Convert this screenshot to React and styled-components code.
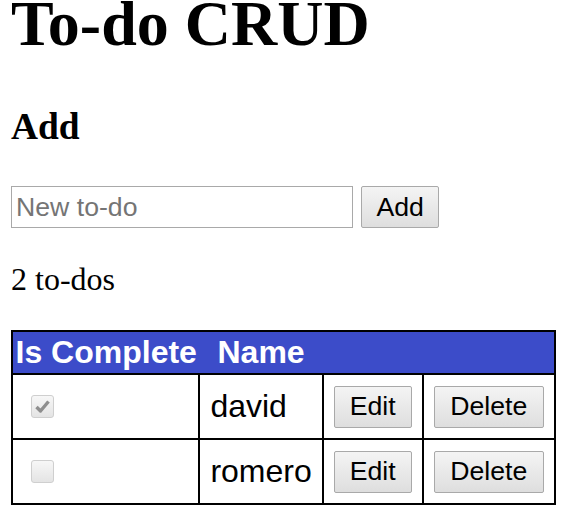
import React, { useState } from 'react';
import styled, { createGlobalStyle } from 'styled-components';

const GlobalStyle = createGlobalStyle`
  html, body {
    margin: 0;
    padding: 0;
    background: #fff;
  }
  body {
    padding: 0 11px;
    font-family: "Liberation Serif", "Times New Roman", serif;
    font-size: 32px;
    color: #000;
  }
`

const Title = styled.h1`
  margin: 0;
  font-size: 64px;
  line-height: 48px;
  font-weight: bold;
`

const SubTitle = styled.h3`
  margin: 57px 0 0;
  font-size: 37.44px;
  line-height: 43px;
  font-weight: bold;
`

const AddForm = styled.form`
  display: flex;
  align-items: center;
  gap: 8px;
  margin-top: 38px;
`

const TextInput = styled.input`
  box-sizing: border-box;
  width: 342px;
  height: 42px;
  padding: 0 4px;
  border: 1px solid #a9a9a9;
  border-radius: 0;
  font-family: "Liberation Sans", Arial, sans-serif;
  font-size: 26.67px;
  color: #000;
  outline: none;

  &::placeholder {
    color: #757575;
  }
`

const Button = styled.button`
  box-sizing: border-box;
  height: 42px;
  padding: 0 ${p => p.$pad || 14.5}px;
  border: 1px solid #a9a9a9;
  border-radius: 2px;
  background: linear-gradient(#f4f4f4, #dedede);
  font-family: "Liberation Sans", Arial, sans-serif;
  font-size: 26.67px;
  color: #000;
  cursor: pointer;
`

const Count = styled.p`
  margin: 33px 0 0;
  line-height: 37px;
`

const Table = styled.table`
  margin-top: 32px;
  border-collapse: collapse;
  border: 2px solid #000;
  font-family: "Liberation Sans", Arial, sans-serif;
  font-size: 32px;
`

const HeadRow = styled.tr`
  background: #3c4cc9;
  color: #fff;
`

const Th = styled.th`
  padding: 2px 2.5px;
  font-weight: bold;
  line-height: 37px;
  text-align: center;
`

const Td = styled.td`
  border: 2px solid #000;
  padding: 10.5px 10px;
  vertical-align: middle;
  line-height: 37px;
`

const Check = styled.span`
  display: block;
  box-sizing: border-box;
  width: 23px;
  height: 23px;
  margin-left: 8px;
  border: 1px solid #cfcfcf;
  border-radius: 3px;
  background: linear-gradient(#f7f7f7, #e4e4e4);

  svg {
    display: block;
  }
`

const CheckBox = ({ checked }) => (
  <Check role="checkbox" aria-checked={checked} aria-disabled="true">
    {checked && (
      <svg width="21" height="21" viewBox="0 0 21 21">
        <path d="M4.5 11 L8.5 15 L16.5 5.5" fill="none" stroke="#8e8e8e" strokeWidth="3.4" strokeLinejoin="round" />
      </svg>
    )}
  </Check>
)

const initialTodos = [
  { id: 1, name: 'david', isComplete: true },
  { id: 2, name: 'romero', isComplete: false },
]

const App = () => {
  const [todos, setTodos] = useState(initialTodos)
  const [term, setTerm] = useState('')

  function handleAdd(e) {
    e.preventDefault()
    if (!term) return
    setTodos([...todos, { id: Date.now(), name: term, isComplete: false }])
    setTerm('')
  }

  function handleDelete(id) {
    setTodos(todos.filter(item => item.id !== id))
  }

  return (
    <>
      <GlobalStyle />
      <Title>To-do CRUD</Title>
      <SubTitle>Add</SubTitle>
      <AddForm onSubmit={handleAdd}>
        <TextInput
          value={term}
          onChange={e => setTerm(e.target.value)}
          placeholder='New to-do'
        />
        <Button type='submit'>Add</Button>
      </AddForm>
      <Count>{todos.length} to-dos</Count>
      <Table>
        <thead>
          <HeadRow>
            <Th>Is Complete</Th>
            <Th>Name</Th>
            <Th colSpan={2}></Th>
          </HeadRow>
        </thead>
        <tbody>
          {todos.map(item => (
            <tr key={item.id}>
              <Td><CheckBox checked={item.isComplete} /></Td>
              <Td>{item.name}</Td>
              <Td><Button type='button' $pad={15}>Edit</Button></Td>
              <Td><Button type='button' $pad={15.5} onClick={() => handleDelete(item.id)}>Delete</Button></Td>
            </tr>
          ))}
        </tbody>
      </Table>
    </>
  )
}

export default App
